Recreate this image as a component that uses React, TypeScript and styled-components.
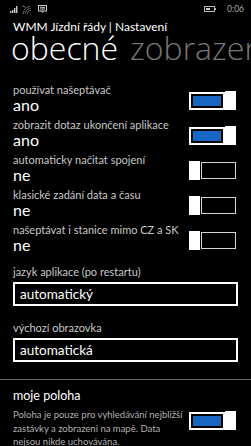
import React from "react";
import styled, { createGlobalStyle } from "styled-components";

const Global = createGlobalStyle`
  html, body { margin: 0; padding: 0; background: #000; }
  body { font-family: "Lato", "Open Sans", sans-serif; color: #fff; }
  * { box-sizing: border-box; }
`;

const Screen = styled.div`
  width: 251px;
  height: 446px;
  overflow: hidden;
  background: #000;
`;

const StatusBar = styled.div`
  height: 17px;
  display: flex;
  align-items: center;
  padding: 1px 7px 0 10px;
  color: #aaa;
  font-size: 8.5px;
`;

const StatusLeft = styled.div`
  display: flex;
  align-items: center;
  gap: 4px;
  flex: 1;
`;

const StatusRight = styled.div`
  display: flex;
  align-items: center;
  gap: 11px;
`;

const AppTitle = styled.div`
  padding-left: 13px;
  margin-top: 2px;
  font-size: 12px;
  line-height: 16px;
  white-space: nowrap;
`;

const PivotHeader = styled.div`
  display: flex;
  gap: 12px;
  padding-left: 11px;
  white-space: nowrap;
  font-family: "Open Sans", sans-serif;
  font-size: 32px;
  font-weight: 300;
  line-height: 26px;
  height: 26px;
`;

const PivotItem = styled.span<{ $active?: boolean }>`
  color: ${(p) => (p.$active ? "#fff" : "#777")};
`;

const Content = styled.div`
  margin-top: 22px;
`;

const ToggleRow = styled.div`
  display: flex;
  align-items: flex-start;
  justify-content: space-between;
  height: 35px;
  padding: 0 15px 0 13px;
`;

const ToggleText = styled.div`
  display: flex;
  flex-direction: column;
`;

const Label = styled.div`
  font-size: 11px;
  line-height: 13px;
  color: #c8c8c8;
  white-space: nowrap;
`;

const Value = styled.div`
  font-size: 16px;
  line-height: 18px;
  color: #fff;
`;

const Switch = styled.div<{ $on?: boolean; $top: number }>`
  display: flex;
  align-items: center;
  flex-direction: ${(p) => (p.$on ? "row" : "row-reverse")};
  gap: ${(p) => (p.$on ? "0" : "1.5px")};
  width: 47px;
  height: 19px;
  margin-top: ${(p) => p.$top}px;
  flex-shrink: 0;
`;

const Track = styled.div<{ $on?: boolean }>`
  flex: 1;
  height: ${(p) => (p.$on ? "18px" : "17px")};
  border: ${(p) => (p.$on ? "2px solid #fff" : "1.5px solid #d4d4d4")};
  padding: 2px 1.5px 2px 2px;
  background: #000;
`;

const Fill = styled.div`
  width: 100%;
  height: 100%;
  background: #1766c2;
`;

const Thumb = styled.div<{ $on?: boolean }>`
  width: ${(p) => (p.$on ? "11.5px" : "10.5px")};
  height: 19px;
  background: #fff;
`;

const FieldGroup = styled.div<{ $gap: number }>`
  padding: 0 13px;
  margin-top: ${(p) => p.$gap}px;
`;

const FieldLabel = styled.div`
  font-size: 11px;
  line-height: 13px;
  color: #c8c8c8;
  margin-bottom: 4px;
`;

const Field = styled.div`
  height: 24px;
  border: 2px solid #fff;
  display: flex;
  align-items: center;
  padding-left: 5px;
  font-size: 13.5px;
`;

const Separator = styled.div`
  height: 1px;
  background: #6a6a6a;
  margin-top: 17px;
`;

const SectionTitle = styled.div`
  padding: 8px 13px 0;
  font-size: 12.5px;
  line-height: 16px;
`;

const LocationRow = styled.div`
  display: flex;
  align-items: flex-start;
  justify-content: space-between;
  padding: 4px 15px 0 13px;
`;

const Description = styled.div`
  font-size: 9.5px;
  line-height: 13.5px;
  color: #b0b0b0;
  white-space: nowrap;
`;

function Toggle({ on, top }: { on?: boolean; top: number }) {
  return (
    <Switch $on={on} $top={top}>
      <Track $on={on}>{on && <Fill />}</Track>
      <Thumb $on={on} />
    </Switch>
  );
}

const rows: { label: string; on: boolean }[] = [
  { label: "používat našeptávač", on: true },
  { label: "zobrazit dotaz ukončení aplikace", on: true },
  { label: "automaticky načitat spojení", on: false },
  { label: "klasické zadání data a času", on: false },
  { label: "našeptávat i stanice mimo CZ a SK", on: false },
];

export default function App() {
  return (
    <Screen>
      <Global />
      <StatusBar>
        <StatusLeft>
          <svg width="8" height="7" viewBox="0 0 8 7">
            <rect x="0" y="5" width="1.4" height="2" fill="#ccc" />
            <rect x="2" y="4" width="1.4" height="3" fill="#ccc" />
            <rect x="4" y="2" width="1.4" height="5" fill="#ccc" />
            <rect x="6" y="0" width="1.4" height="7" fill="#ccc" />
          </svg>
          <svg width="10" height="9" viewBox="0 0 10 9" fill="none" stroke="#bbb" strokeWidth="1">
            <path d="M1.5 8.5 A7 7 0 0 1 8.5 1.5" strokeDasharray="1 0.8" />
            <path d="M3.5 8.5 A5 5 0 0 1 8.5 3.5" strokeDasharray="1 0.8" />
            <path d="M5.5 8.5 A3 3 0 0 1 8.5 5.5" strokeDasharray="1 0.8" />
            <path d="M1 0.5 L3 2.5" />
          </svg>
          <svg width="9" height="8" viewBox="0 0 9 8" fill="none" stroke="#ccc" strokeWidth="1" style={{ marginLeft: 2 }}>
            <rect x="0.5" y="0.5" width="8" height="5.5" />
            <path d="M2 2.3 H7 M2 4 H7" />
            <path d="M3.5 6 L4.5 7.5 L5.5 6" />
          </svg>
        </StatusLeft>
        <StatusRight>
          <svg width="12" height="6" viewBox="0 0 12 6">
            <rect x="0.5" y="0.5" width="10" height="5" fill="none" stroke="#bbb" />
            <rect x="2" y="2" width="4" height="2" fill="#ccc" />
            <rect x="10.5" y="2" width="1.5" height="2" fill="#bbb" />
          </svg>
          <span>0:06</span>
        </StatusRight>
      </StatusBar>
      <AppTitle>WMM Jízdní řády | Nastavení</AppTitle>
      <PivotHeader>
        <PivotItem $active>obecné</PivotItem>
        <PivotItem>zobrazení</PivotItem>
      </PivotHeader>
      <Content>
        {rows.map((r) => (
          <ToggleRow key={r.label}>
            <ToggleText>
              <Label>{r.label}</Label>
              <Value>{r.on ? "ano" : "ne"}</Value>
            </ToggleText>
            <Toggle on={r.on} top={8} />
          </ToggleRow>
        ))}
        <FieldGroup $gap={7}>
          <FieldLabel>jazyk aplikace (po restartu)</FieldLabel>
          <Field>automatický</Field>
        </FieldGroup>
        <FieldGroup $gap={15}>
          <FieldLabel>výchozí obrazovka</FieldLabel>
          <Field>automatická</Field>
        </FieldGroup>
        <Separator />
        <SectionTitle>moje poloha</SectionTitle>
        <LocationRow>
          <Description>
            Poloha je pouze pro vyhledávání nejbližší
            <br />
            zastávky a zobrazeni na mapě. Data
            <br />
            nejsou nikde uchovávána.
          </Description>
          <Toggle on top={3} />
        </LocationRow>
      </Content>
    </Screen>
  );
}
